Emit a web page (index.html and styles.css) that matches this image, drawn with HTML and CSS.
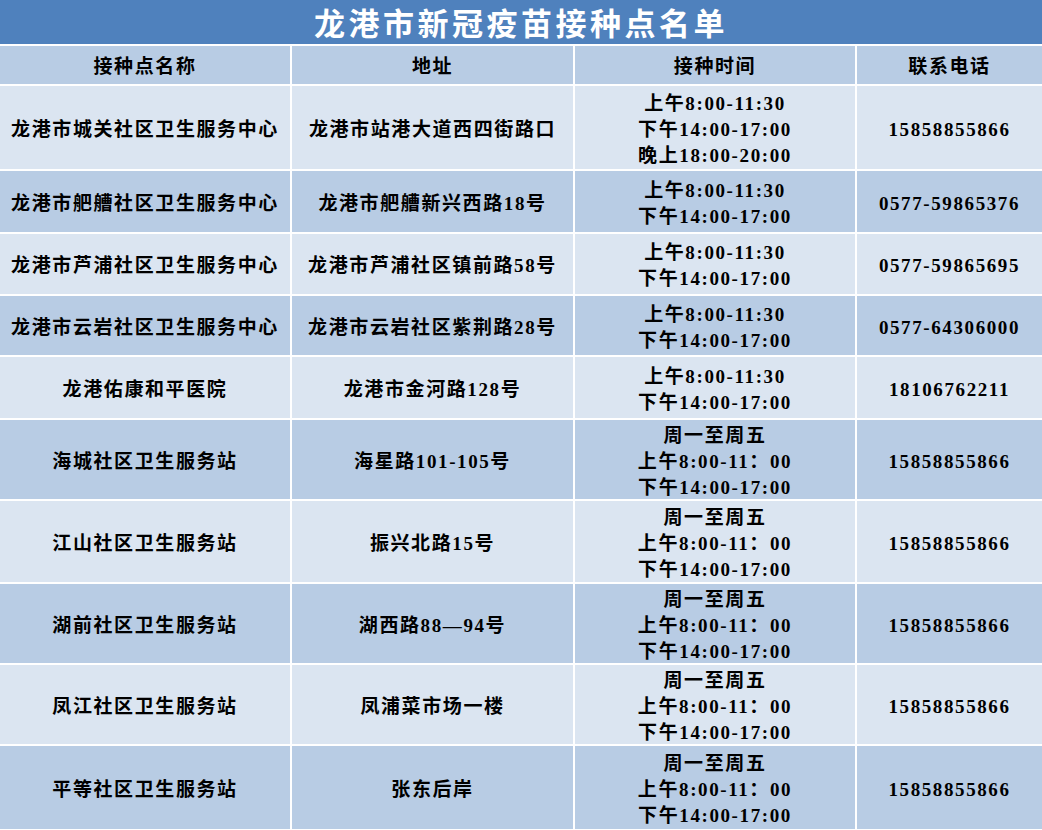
FILE: index.html
```html
<!DOCTYPE html>
<html lang="zh-CN">
<head>
<meta charset="utf-8">
<title>龙港市新冠疫苗接种点名单</title>
<link rel="stylesheet" href="styles.css">
</head>
<body>
<div class="sheet">
  <div class="title">龙港市新冠疫苗接种点名单</div>
  <div class="grid">
    <div class="cell head">接种点名称</div>
    <div class="cell head">地址</div>
    <div class="cell head">接种时间</div>
    <div class="cell head">联系电话</div>

    <div class="cell light">龙港市城关社区卫生服务中心</div>
    <div class="cell light">龙港市站港大道西四街路口</div>
    <div class="cell light">上午8:00-11:30<br>下午14:00-17:00<br>晚上18:00-20:00</div>
    <div class="cell light">15858855866</div>

    <div class="cell dark">龙港市舥艚社区卫生服务中心</div>
    <div class="cell dark">龙港市舥艚新兴西路18号</div>
    <div class="cell dark">上午8:00-11:30<br>下午14:00-17:00</div>
    <div class="cell dark">0577-59865376</div>

    <div class="cell light">龙港市芦浦社区卫生服务中心</div>
    <div class="cell light">龙港市芦浦社区镇前路58号</div>
    <div class="cell light">上午8:00-11:30<br>下午14:00-17:00</div>
    <div class="cell light">0577-59865695</div>

    <div class="cell dark">龙港市云岩社区卫生服务中心</div>
    <div class="cell dark">龙港市云岩社区紫荆路28号</div>
    <div class="cell dark">上午8:00-11:30<br>下午14:00-17:00</div>
    <div class="cell dark">0577-64306000</div>

    <div class="cell light">龙港佑康和平医院</div>
    <div class="cell light">龙港市金河路128号</div>
    <div class="cell light">上午8:00-11:30<br>下午14:00-17:00</div>
    <div class="cell light">18106762211</div>

    <div class="cell dark">海城社区卫生服务站</div>
    <div class="cell dark">海星路101-105号</div>
    <div class="cell dark">周一至周五<br>上午8:00-11：00<br>下午14:00-17:00</div>
    <div class="cell dark">15858855866</div>

    <div class="cell light">江山社区卫生服务站</div>
    <div class="cell light">振兴北路15号</div>
    <div class="cell light">周一至周五<br>上午8:00-11：00<br>下午14:00-17:00</div>
    <div class="cell light">15858855866</div>

    <div class="cell dark">湖前社区卫生服务站</div>
    <div class="cell dark">湖西路88—94号</div>
    <div class="cell dark">周一至周五<br>上午8:00-11：00<br>下午14:00-17:00</div>
    <div class="cell dark">15858855866</div>

    <div class="cell light">凤江社区卫生服务站</div>
    <div class="cell light">凤浦菜市场一楼</div>
    <div class="cell light">周一至周五<br>上午8:00-11：00<br>下午14:00-17:00</div>
    <div class="cell light">15858855866</div>

    <div class="cell dark">平等社区卫生服务站</div>
    <div class="cell dark">张东后岸</div>
    <div class="cell dark">周一至周五<br>上午8:00-11：00<br>下午14:00-17:00</div>
    <div class="cell dark">15858855866</div>
  </div>
</div>
</body>
</html>
```

FILE: styles.css
```css
html, body {
  margin: 0;
  padding: 0;
  background: #ffffff;
}

.sheet {
  width: 1042px;
  height: 830px;
  overflow: hidden;
  background: #ffffff;
}

.title {
  height: 44px;
  background: #4f81bd;
  color: #ffffff;
  font-family: "Noto Sans CJK SC", "Noto Sans", sans-serif;
  font-weight: 700;
  font-size: 31px;
  letter-spacing: 3.5px;
  line-height: 44px;
  text-align: center;
  margin-bottom: 2px;
}

.grid {
  display: grid;
  grid-template-columns: 290px 281px 280px 1fr;
  grid-template-rows: 38px 83px 61px 60px 59px 61px 79px 81px 79px 79px 83px;
  gap: 2px;
  background: #ffffff;
}

.cell {
  display: flex;
  align-items: center;
  justify-content: center;
  text-align: center;
  box-sizing: border-box;
  padding-top: 4px;
  font-family: "Liberation Serif", "Noto Sans CJK SC", serif;
  font-weight: 700;
  font-size: 19px;
  letter-spacing: 1.6px;
  line-height: 26px;
  color: #000000;
  white-space: nowrap;
}

.head {
  background: #b8cce4;
}

.dark {
  background: #b8cce4;
}

.light {
  background: #dbe5f1;
}
```
